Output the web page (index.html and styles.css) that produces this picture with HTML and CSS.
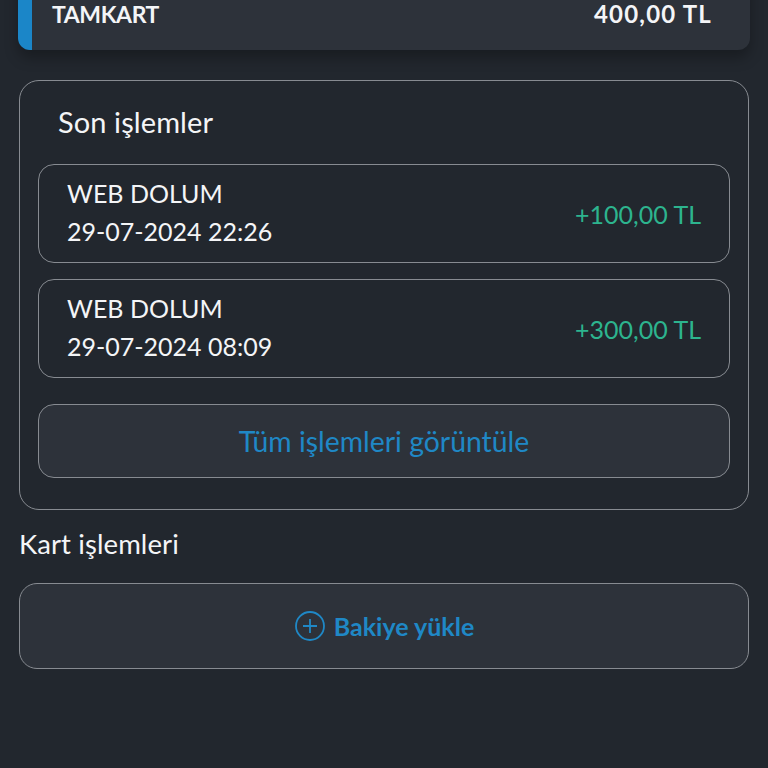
FILE: index.html
```html
<!DOCTYPE html>
<html lang="tr">
<head>
<meta charset="utf-8">
<title>Kart</title>
<link rel="stylesheet" href="styles.css">
</head>
<body>
<main class="page">
  <section class="balance-card">
    <span class="card-name">TAMKART</span>
    <span class="card-amount">400,00 TL</span>
  </section>

  <section class="recent">
    <h2 class="recent-title">Son işlemler</h2>
    <div class="tx">
      <div class="tx-info">
        <div>WEB DOLUM</div>
        <div>29-07-2024 22:26</div>
      </div>
      <div class="tx-amount">+100,00 TL</div>
    </div>
    <div class="tx">
      <div class="tx-info">
        <div>WEB DOLUM</div>
        <div>29-07-2024 08:09</div>
      </div>
      <div class="tx-amount">+300,00 TL</div>
    </div>
    <button class="all-btn">Tüm işlemleri görüntüle</button>
  </section>

  <h2 class="section-title">Kart işlemleri</h2>
  <button class="load-btn">
    <svg class="plus" width="32" height="32" viewBox="0 0 32 32" aria-hidden="true">
      <circle cx="16" cy="16" r="14" fill="none" stroke="currentColor" stroke-width="1.8"/>
      <path d="M16 9v14M9 16h14" stroke="currentColor" stroke-width="1.8" fill="none"/>
    </svg>
    <span>Bakiye yükle</span>
  </button>
</main>
</body>
</html>
```

FILE: styles.css
```css
* { box-sizing: border-box; }
html, body {
  margin: 0;
  padding: 0;
  background: #22272e;
  height: 100%;
  overflow: hidden;
}
body {
  font-family: Lato, "Open Sans", "Noto Sans", sans-serif;
  color: #f4f5f7;
}
.page {
  padding: 0 18px 0 18px;
  display: flex;
  flex-direction: column;
}
.balance-card {
  margin-top: -40px;
  height: 90px;
  background: #2d323a;
  border-left: 14px solid #1b86c8;
  border-radius: 12px;
  display: flex;
  justify-content: space-between;
  align-items: flex-start;
  padding: 39px 38px 0 20px;
  box-shadow: 0 8px 14px rgba(0,0,0,0.28);
}
.card-name, .card-amount {
  font-size: 23px;
  font-weight: 700;
  line-height: 30px;
}
.card-name { letter-spacing: -0.4px; }
.card-amount { letter-spacing: 1.2px; font-size: 24px; }
.recent {
  margin: 30px 1px 0 1px;
  border: 1.5px solid #878b91;
  border-radius: 20px;
  padding: 21px 18px 31px 18px;
  display: flex;
  flex-direction: column;
}
.recent-title {
  margin: 0 0 22px 20px;
  font-size: 29px;
  font-weight: 400;
  line-height: 40px;
  letter-spacing: 0.1px;
}
.tx {
  height: 99px;
  border: 1.5px solid #878b91;
  border-radius: 16px;
  display: flex;
  align-items: center;
  justify-content: space-between;
  padding: 0 28px 4px 28px;
  margin-bottom: 16px;
}
.tx + .tx { margin-bottom: 26px; }
.tx-info {
  font-size: 25px;
  line-height: 38px;
  color: #f4f5f7;
}
.tx-amount {
  font-size: 25px;
  color: #2db48e;
  padding-top: 4px;
}
.all-btn {
  height: 74px;
  border: 1.5px solid #878b91;
  border-radius: 16px;
  background: #2d323a;
  color: #1f88c6;
  font-family: inherit;
  font-size: 28.4px;
  letter-spacing: 0;
  cursor: pointer;
}
.section-title {
  margin: 16px 0 0 1px;
  font-size: 27.5px;
  font-weight: 400;
  line-height: 36px;
  letter-spacing: 0.1px;
}
.load-btn {
  margin: 21px 1px 0 1px;
  height: 86px;
  border: 1.5px solid #878b91;
  border-radius: 18px;
  background: #2d323a;
  color: #1f88c6;
  font-family: inherit;
  font-size: 25px;
  font-weight: 700;
  display: flex;
  align-items: center;
  justify-content: center;
  gap: 8px;
  cursor: pointer;
}
.plus { display: block; }
```
